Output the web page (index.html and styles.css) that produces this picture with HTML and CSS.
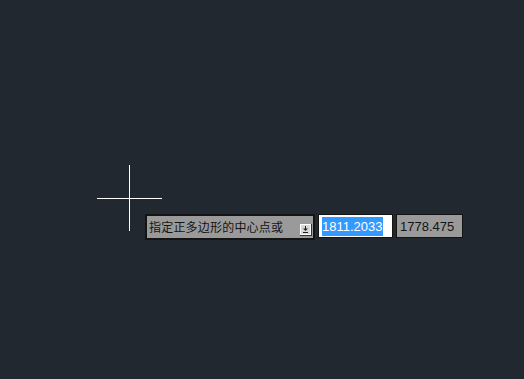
FILE: index.html
```html
<!DOCTYPE html>
<html>
<head>
<meta charset="utf-8">
<link rel="stylesheet" href="styles.css">
</head>
<body>
<div class="canvas">
  <div class="cross-v"></div>
  <div class="cross-h"></div>
  <div class="tip">
    <div class="prompt">
      <span class="prompt-text">指定正多边形的中心点或</span>
      <svg class="drop" width="12" height="12" viewBox="0 0 12 12">
        <rect x="0" y="0" width="12" height="12" fill="#2020c8"/>
        <rect x="0" y="0" width="11" height="11" fill="#ffffff"/>
        <rect x="1" y="1" width="9" height="9" fill="#d8d8d8"/>
        <path d="M3 4.5 H8 L5.5 7 Z" fill="#202020"/>
        <rect x="3" y="8" width="5" height="1" fill="#202020"/>
        <rect x="5" y="2" width="1" height="3" fill="#202020"/>
      </svg>
    </div>
    <div class="field field-edit"><span class="sel">1811.2033</span></div>
    <div class="field field-ro">1778.475</div>
  </div>
</div>
</body>
</html>
```
FILE: styles.css
```css
html, body {
  margin: 0;
  padding: 0;
  background: #212830;
}
.canvas {
  position: relative;
  width: 524px;
  height: 379px;
  overflow: hidden;
  background: #212830;
}
.cross-v {
  position: absolute;
  left: 129px;
  top: 165px;
  width: 1px;
  height: 66px;
  background: #ffffff;
}
.cross-h {
  position: absolute;
  left: 97px;
  top: 198px;
  width: 65px;
  height: 1px;
  background: #ffffff;
}
.tip {
  position: absolute;
  left: 145px;
  top: 214px;
  display: flex;
  align-items: flex-start;
  gap: 3px;
}
.prompt {
  box-sizing: border-box;
  width: 170px;
  height: 26px;
  border: 2px solid #141414;
  background: #9a9a9a;
  display: flex;
  align-items: center;
  padding-left: 2px;
  position: relative;
}
.prompt-text {
  font-family: "Noto Sans CJK SC", "Noto Sans", sans-serif;
  font-size: 12px;
  color: #141414;
  letter-spacing: 0.2px;
  line-height: 14px;
  margin-top: -1px;
}
.drop {
  position: absolute;
  left: 153px;
  top: 8px;
}
.field {
  box-sizing: border-box;
  height: 24px;
  font-family: "Liberation Sans", Arial, sans-serif;
  font-size: 13px;
  display: flex;
  align-items: center;
}
.field-edit {
  width: 75px;
  border: 1px solid #141414;
  background: #ffffff;
  padding-left: 3px;
}
.sel {
  background: #3399ff;
  color: #ffffff;
  line-height: 19px;
}
.field-ro {
  width: 67px;
  border: 1px solid #141414;
  background: #9a9a9a;
  color: #141414;
  padding-left: 3px;
}
```
